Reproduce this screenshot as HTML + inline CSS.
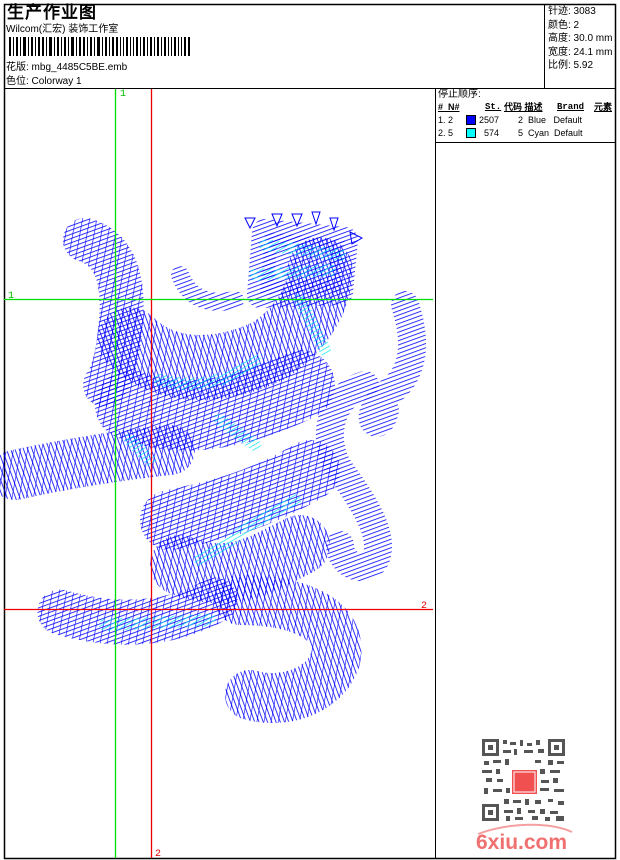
<!DOCTYPE html>
<html><head><meta charset="utf-8"><style>
body{margin:0;width:620px;height:860px;background:#fff;overflow:hidden;font-family:"Liberation Sans","WenQuanYi Zen Hei",sans-serif;color:#000}
.a{position:absolute;white-space:nowrap}
</style></head><body>
<svg width="620" height="860" style="position:absolute;left:0;top:0">
<defs>
<pattern id="h" width="4" height="4" patternUnits="userSpaceOnUse" patternTransform="rotate(70)"><line x1="0" y1="0" x2="0" y2="4" stroke="#0000ff" stroke-width="1.6"/></pattern>
<pattern id="h2" width="4" height="4" patternUnits="userSpaceOnUse" patternTransform="rotate(-20)"><line x1="0" y1="0" x2="0" y2="4" stroke="#0000ff" stroke-width="1.6"/></pattern>
<pattern id="h3" width="7" height="7" patternUnits="userSpaceOnUse" patternTransform="rotate(10)"><line x1="0" y1="0" x2="0" y2="7" stroke="#0000ff" stroke-width="1.2"/></pattern>
<pattern id="c" width="4" height="4" patternUnits="userSpaceOnUse" patternTransform="rotate(60)"><line x1="0" y1="0" x2="0" y2="4" stroke="#00e5ee" stroke-width="1.4"/></pattern>
</defs>
<rect x="4.5" y="4.5" width="611" height="854" fill="none" stroke="#000" stroke-width="1.5"/>
<line x1="4" y1="88.5" x2="616" y2="88.5" stroke="#000"/>
<line x1="544.5" y1="4" x2="544.5" y2="88" stroke="#000"/>
<line x1="435.5" y1="88" x2="435.5" y2="859" stroke="#000"/>
<line x1="435" y1="142.5" x2="616" y2="142.5" stroke="#000"/>
<g fill="#000">
<rect x="9" y="37" width="2" height="19"/><rect x="13" y="37" width="1" height="19"/><rect x="16" y="37" width="2" height="19"/><rect x="20" y="37" width="1" height="19"/><rect x="23" y="37" width="3" height="19"/><rect x="28" y="37" width="1" height="19"/><rect x="31" y="37" width="2" height="19"/><rect x="35" y="37" width="1" height="19"/><rect x="38" y="37" width="2" height="19"/><rect x="42" y="37" width="2" height="19"/><rect x="46" y="37" width="1" height="19"/><rect x="49" y="37" width="3" height="19"/><rect x="54" y="37" width="1" height="19"/><rect x="57" y="37" width="2" height="19"/><rect x="61" y="37" width="1" height="19"/><rect x="64" y="37" width="2" height="19"/><rect x="68" y="37" width="1" height="19"/><rect x="71" y="37" width="3" height="19"/><rect x="76" y="37" width="1" height="19"/><rect x="79" y="37" width="2" height="19"/><rect x="83" y="37" width="2" height="19"/><rect x="87" y="37" width="1" height="19"/><rect x="90" y="37" width="2" height="19"/><rect x="94" y="37" width="1" height="19"/><rect x="97" y="37" width="3" height="19"/><rect x="102" y="37" width="1" height="19"/><rect x="105" y="37" width="2" height="19"/><rect x="109" y="37" width="1" height="19"/><rect x="112" y="37" width="2" height="19"/><rect x="116" y="37" width="2" height="19"/><rect x="120" y="37" width="1" height="19"/><rect x="123" y="37" width="1" height="19"/><rect x="126" y="37" width="2" height="19"/><rect x="130" y="37" width="1" height="19"/><rect x="133" y="37" width="1" height="19"/><rect x="136" y="37" width="2" height="19"/><rect x="140" y="37" width="1" height="19"/><rect x="143" y="37" width="2" height="19"/><rect x="147" y="37" width="1" height="19"/><rect x="150" y="37" width="2" height="19"/><rect x="154" y="37" width="1" height="19"/><rect x="157" y="37" width="2" height="19"/><rect x="161" y="37" width="1" height="19"/><rect x="164" y="37" width="2" height="19"/><rect x="168" y="37" width="1" height="19"/><rect x="171" y="37" width="1" height="19"/><rect x="174" y="37" width="2" height="19"/><rect x="178" y="37" width="1" height="19"/><rect x="181" y="37" width="1" height="19"/><rect x="184" y="37" width="2" height="19"/><rect x="188" y="37" width="2" height="19"/>
</g>
<g fill="none" stroke-linecap="round" stroke-linejoin="round">
<path d="M85,240 C120,250 125,290 120,330 C118,360 110,380 105,385" stroke="url(#h)" stroke-width="44"/>
<path d="M85,240 C120,250 125,290 120,330 C118,360 110,380 105,385" stroke="url(#h3)" stroke-width="44"/>
<path d="M130,340 C170,380 230,370 270,350 C300,330 320,300 320,270" stroke="url(#h2)" stroke-width="65"/>
<path d="M130,340 C170,380 230,370 270,350 C300,330 320,300 320,270" stroke="url(#h3)" stroke-width="65"/>
<path d="M265,232 L345,240 L340,292 L260,295 Z" stroke="url(#h)" stroke-width="26" fill="url(#h)"/>
<path d="M130,405 C180,425 240,415 300,385" stroke="url(#h)" stroke-width="70"/>
<path d="M130,405 C180,425 240,415 300,385" stroke="url(#h3)" stroke-width="70"/>
<path d="M15,475 C60,465 120,455 170,450" stroke="url(#h2)" stroke-width="50"/>
<path d="M15,475 C60,465 120,455 170,450" stroke="url(#h3)" stroke-width="50"/>
<path d="M170,520 C220,510 260,500 310,470" stroke="url(#h)" stroke-width="60"/>
<path d="M170,520 C220,510 260,500 310,470" stroke="url(#h3)" stroke-width="60"/>
<path d="M180,565 C230,585 260,565 300,545" stroke="url(#h2)" stroke-width="60"/>
<path d="M180,565 C230,585 260,565 300,545" stroke="url(#h3)" stroke-width="60"/>
<path d="M60,612 C110,627 170,627 215,600" stroke="url(#h)" stroke-width="45"/>
<path d="M60,612 C110,627 170,627 215,600" stroke="url(#h3)" stroke-width="45"/>
<path d="M240,600 C300,600 345,620 335,660 C325,690 285,705 250,695" stroke="url(#h2)" stroke-width="50"/>
<path d="M240,600 C300,600 345,620 335,660 C325,690 285,705 250,695" stroke="url(#h3)" stroke-width="50"/>
<path d="M405,305 C420,350 410,380 385,395 C360,420 380,435 385,410" stroke="url(#h)" stroke-width="28"/>
<path d="M365,385 C330,395 320,440 340,470 C370,510 385,540 375,560 C365,575 340,565 340,545" stroke="url(#h)" stroke-width="28"/>
<path d="M180,275 C190,300 210,305 235,300" stroke="url(#h)" stroke-width="18"/>
<path d="M265,245 L340,255 M255,275 L330,270 M300,300 L325,350 M160,380 C200,390 230,380 255,360 M130,440 L150,460 M220,420 L255,445 M200,560 C230,540 260,520 295,500 M105,625 L210,620" stroke="url(#c)" stroke-width="12"/>
</g>
<g fill="none" stroke="#0000ff" stroke-width="1">
<path d="M245,218 L255,218 L250,228 Z M272,214 L282,214 L277,226 Z M292,214 L302,214 L297,226 Z M312,212 L320,212 L316,224 Z M330,218 L338,218 L334,230 Z M350,232 L362,238 L352,244 Z"/>
</g>
<line x1="115.5" y1="89" x2="115.5" y2="858" stroke="#00e000" stroke-width="1.3"/>
<line x1="151.5" y1="89" x2="151.5" y2="858" stroke="#ee0000" stroke-width="1.3"/>
<line x1="4" y1="299.5" x2="433" y2="299.5" stroke="#00e000" stroke-width="1.3"/>
<line x1="4" y1="609.5" x2="433" y2="609.5" stroke="#ee0000" stroke-width="1.3"/>
<text x="120" y="96" fill="#00c000" font-size="10" font-family="Liberation Mono">1</text>
<text x="8" y="298" fill="#00c000" font-size="10" font-family="Liberation Mono">1</text>
<text x="155" y="856" fill="#e00000" font-size="10" font-family="Liberation Mono">2</text>
<text x="421" y="608" fill="#e00000" font-size="10" font-family="Liberation Mono">2</text>
<rect x="466.5" y="115.5" width="9" height="9" fill="#0000ff" stroke="#000"/>
<rect x="466.5" y="128.5" width="9" height="9" fill="#00ffff" stroke="#000"/>
<g fill="#555">
<rect x="482" y="739" width="17" height="17"/><rect x="548" y="739" width="17" height="17"/><rect x="482" y="804" width="17" height="17"/>
<path d="M503,740h4v4h-4zM510,742h6v3h-6zM520,740h3v6h-3zM527,743h5v3h-5zM536,740h4v5h-4zM503,750h8v3h-8zM514,749h3v6h-3zM524,750h9v3h-9zM538,749h6v4h-6zM484,761h5v4h-5zM493,760h8v3h-8zM505,759h4v6h-4zM535,760h6v3h-6zM548,760h5v5h-5zM557,761h7v3h-7zM482,770h10v3h-10zM496,769h4v5h-4zM540,769h5v5h-5zM550,770h10v3h-10zM486,778h6v4h-6zM497,779h6v3h-6zM541,780h8v3h-8zM553,778h5v5h-5zM484,788h4v6h-4zM493,789h9v3h-9zM506,788h4v5h-4zM520,790h6v3h-6zM530,789h4v5h-4zM540,788h9v3h-9zM554,789h10v3h-10zM504,799h5v5h-5zM513,800h8v3h-8zM525,799h4v6h-4zM535,800h6v4h-6zM548,799h5v3h-5zM558,801h6v4h-6zM504,810h9v3h-9zM517,808h4v6h-4zM528,810h7v3h-7zM540,809h5v5h-5zM550,811h8v3h-8zM506,816h4v5h-4zM515,817h8v3h-8zM532,816h6v4h-6zM545,817h5v4h-5zM556,816h8v5h-8z"/>
</g>
<g fill="#fff"><rect x="485" y="742" width="11" height="11"/><rect x="551" y="742" width="11" height="11"/><rect x="485" y="807" width="11" height="11"/></g>
<g fill="#555"><rect x="488" y="745" width="5" height="5"/><rect x="554" y="745" width="5" height="5"/><rect x="488" y="810" width="5" height="5"/></g>
<rect x="512" y="770" width="25" height="24" fill="#f05050"/>
<rect x="514" y="772" width="21" height="20" fill="none" stroke="#fff" stroke-width="1"/>
<path d="M478,834 C510,822 550,822 572,832" stroke="#f5a0a0" stroke-width="2" fill="none"/>
<text x="476" y="849" fill="#f07070" font-size="21" font-weight="bold" font-family="Liberation Sans">6xiu.com</text>
</svg>
<div class="a" style="left:7px;top:4px;font-size:17px;line-height:18px;font-weight:bold;letter-spacing:1px">生产作业图</div>
<div class="a" style="left:6px;top:24px;font-size:10px;line-height:12px">Wilcom(汇宏) 装饰工作室</div>
<div class="a" style="left:6px;top:62px;font-size:10px;line-height:12px">花版: mbg_4485C5BE.emb</div>
<div class="a" style="left:6px;top:76px;font-size:10px;line-height:12px">色位: Colorway 1</div>
<div class="a" style="left:548px;top:5px;font-size:10px;line-height:13.5px">针迹: 3083<br>颜色: 2<br>高度: 30.0 mm<br>宽度: 24.1 mm<br>比例: 5.92</div>
<div class="a" style="left:438px;top:89px;font-size:10px;line-height:12px">停止顺序:</div>
<div class="a" style="left:438px;top:102px;font-size:9px;line-height:11px;font-weight:bold;text-decoration:underline">#&nbsp;&nbsp;N#</div>
<div class="a" style="left:485px;top:102px;font-size:9px;line-height:11px;font-weight:bold;text-decoration:underline;font-family:'Liberation Mono','WenQuanYi Zen Hei',monospace">St.</div>
<div class="a" style="left:504px;top:102px;font-size:9px;line-height:11px;font-weight:bold;text-decoration:underline">代码&nbsp;描述</div>
<div class="a" style="left:557px;top:102px;font-size:9px;line-height:11px;font-weight:bold;text-decoration:underline;font-family:'Liberation Mono',monospace">Brand</div>
<div class="a" style="left:594px;top:102px;font-size:9px;line-height:11px;font-weight:bold;text-decoration:underline">元素</div>
<div class="a" style="left:438px;top:115px;font-size:9px">1. 2</div>
<div class="a" style="left:479px;top:115px;font-size:9px">2507</div>
<div class="a" style="left:518px;top:115px;font-size:9px">2&nbsp; Blue&nbsp;&nbsp; Default</div>
<div class="a" style="left:438px;top:128px;font-size:9px">2. 5</div>
<div class="a" style="left:484px;top:128px;font-size:9px">574</div>
<div class="a" style="left:518px;top:128px;font-size:9px">5&nbsp; Cyan&nbsp; Default</div>
</body></html>
